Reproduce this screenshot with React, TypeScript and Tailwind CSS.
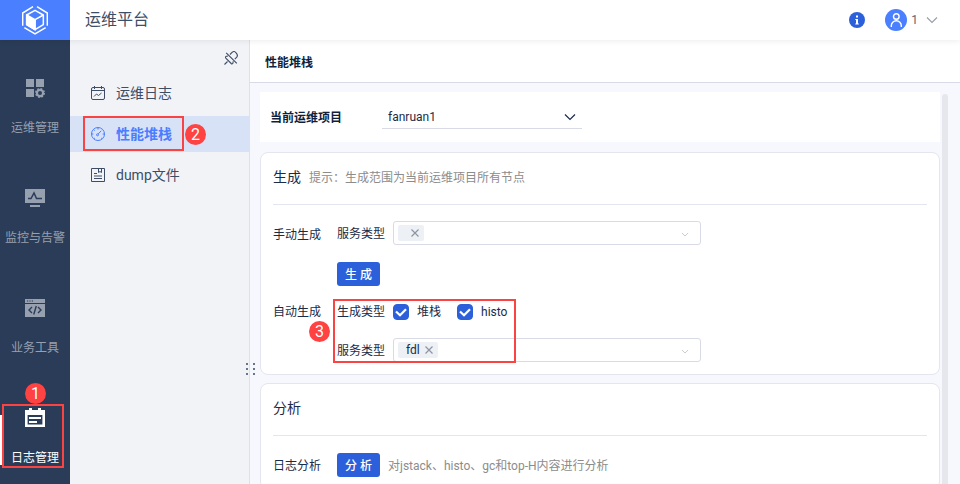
import React from "react";

const Badge = ({ children, className }: { children: React.ReactNode; className: string }) => (
  <span
    className={`absolute z-20 flex size-[21px] items-center justify-center rounded-full bg-[#ff4242] text-base leading-5 font-normal text-white ${className}`}
  >
    {children}
  </span>
);

const Outline = ({ className }: { className: string }) => (
  <span className={`pointer-events-none absolute z-10 border-2 border-[#fa4343] ${className}`} />
);

const Logo = () => (
  <svg className="h-[30px] w-[26px]" viewBox="0 0 78 88" fill="none" stroke="#fff" strokeWidth="4.5">
    <path d="M2 61V23L33 4M45 4l31 19v38M7 67l32 19 32-19" />
    <path d="M39 15 64 29v29L39 73 14 58V29z" strokeLinejoin="round" />
    <path d="M64 29 39 43v29" />
    <path d="M14 29 39 43v30L14 58z" fill="#fff" />
  </svg>
);

const GridIcon = () => (
  <svg className="size-[22px]" viewBox="0 0 22 22" fill="currentColor">
    <path d="M2 2h8v8H2zM12 2h8v8h-8zM2 12h8v8H2z" />
    <circle cx="16" cy="16" r="3.1" fill="none" stroke="currentColor" strokeWidth="2.2" />
    <circle cx="16" cy="16" r="4.3" fill="none" stroke="currentColor" strokeWidth="1.4" strokeDasharray="1.8 1.58" />
  </svg>
);

const MonitorIcon = () => (
  <svg className="size-[22px]" viewBox="0 0 22 22" fill="currentColor">
    <path d="M1 2h20v14H1zM6 18h10v2H6z" />
    <path d="M4 11.5h3L10 6l2.5 5.5H18" fill="none" stroke="#2b3c58" strokeWidth="1.5" />
  </svg>
);

const CodeIcon = () => (
  <svg className="size-[22px]" viewBox="0 0 22 22" fill="currentColor">
    <path d="M1 2h20v4H1zM1 7h20v13H1z" />
    <path d="M3 4h1.2M5.4 4h1.2M7.8 4H9" stroke="#2b3c58" strokeWidth="1.2" />
    <path d="M8 10l-3 3 3 3M14 10l3 3-3 3M12.3 9l-2.6 8.5" fill="none" stroke="#2b3c58" strokeWidth="1.4" />
  </svg>
);

const CalendarIcon = () => (
  <svg className="size-[22px]" viewBox="0 0 22 22" fill="currentColor">
    <path fillRule="evenodd" d="M5 1h3v2h6V1h3v2h4v17H1V3h4zM3.6 8v9.5h14.8V8z" />
    <path d="M5 10h12v2H5zM5 14h8v2H5z" />
  </svg>
);

const LogIcon = () => (
  <svg className="size-4" viewBox="0 0 16 16" fill="none" stroke="currentColor">
    <rect x="1.5" y="2.5" width="13" height="12" rx="1.5" />
    <path d="M1.5 5.5h13M4.5 1v3M11.5 1v3M4 11.5 6.5 9l2 1.5 3-2.5" />
  </svg>
);

const GaugeIcon = () => (
  <svg className="size-4" viewBox="0 0 16 16" fill="none" stroke="currentColor">
    <circle cx="8" cy="8" r="6.5" />
    <circle cx="7.5" cy="8.8" r="1" />
    <path d="M8.2 8l3-3.2M8 1.5v2M3.4 8h-2M14.5 8h-1.8M3.6 3.6l1.1 1.1M4 12.3h.8M11.2 12.3h.8" />
  </svg>
);

const FileIcon = () => (
  <svg className="size-4" viewBox="0 0 16 16" fill="none" stroke="currentColor">
    <path d="M1.5 1.5h13v13h-13z" />
    <path d="M8.5 1.5v4l1.5-1 1.5 1v-4M4 6.5h3M4 9h8M4 11.5h8" />
  </svg>
);

const PinIcon = () => (
  <svg className="size-4" viewBox="0 0 16 16" fill="none" stroke="currentColor" strokeWidth="1.1">
    <path d="M3.2 2.8l10.6 10.6M1.5 14.5l3-3" />
    <path d="M5 6 3.6 6.3c-1 .2-1.5 1-.8 1.8l5.4 5.4c.8.7 1.7.3 1.8-.8l.2-1.5" />
    <path d="M7 4.5l2.3-2.3M11.8 9.2l2.2-2.3M9.2 2.3C10.8.8 12 1.7 13 2.8s2.2 2.3 1 4.1" />
  </svg>
);

const Chevron = ({ className }: { className: string }) => (
  <svg className={className} viewBox="0 0 12 8" fill="none" stroke="currentColor" strokeWidth="1.2">
    <path d="M1 1.5 6 6.5l5-5" />
  </svg>
);

const sections = [
  { label: "运维管理", icon: <GridIcon /> },
  { label: "监控与告警", icon: <MonitorIcon /> },
  { label: "业务工具", icon: <CodeIcon /> },
  { label: "日志管理", icon: <CalendarIcon />, active: true },
];

const pages = [
  { label: "运维日志", icon: <LogIcon /> },
  { label: "性能堆栈", icon: <GaugeIcon />, active: true },
  { label: "dump文件", icon: <FileIcon /> },
];

const Header = () => (
  <header className="relative z-30 flex h-10 shrink-0 items-center bg-white shadow-[0_1px_6px_rgba(0,0,0,0.08)]">
    <a href="#" aria-label="首页" className="flex h-10 w-[70px] items-center justify-center bg-[#4a80ff]">
      <Logo />
    </a>
    <h1 className="ml-[15px] flex-1 text-base text-[#3d4d66]">运维平台</h1>
    <button aria-label="信息" className="mr-5">
      <svg className="size-4" viewBox="0 0 16 16">
        <circle cx="8" cy="8" r="8" fill="#2c60db" />
        <path d="M7 3.5h2v2H7zM6.3 7H9v4.5h.8v1H6.3v-1H7V8h-.7z" fill="#fff" />
      </svg>
    </button>
    <button className="mr-[22px] flex items-center text-xs text-[#5f6470]">
      <svg className="mr-1 size-[22px]" viewBox="0 0 22 22" fill="none" stroke="#fff" strokeWidth="1.4">
        <circle cx="11" cy="11" r="11" fill="#4a80ff" stroke="none" />
        <circle cx="11.3" cy="7.5" r="2.8" />
        <path d="M6.3 18v-1.2a5 5 0 0 1 10 0V18" />
      </svg>
      1
      <Chevron className="ml-2 h-2 w-3 text-[#9a9fa9]" />
    </button>
  </header>
);

const Sidebar = () => (
  <nav className="w-[70px] shrink-0 bg-[#2b3c58] pt-[15px]">
    {sections.map(({ label, icon, active }) => (
      <a
        key={label}
        href="#"
        className={`relative flex h-[110px] flex-col items-center pt-[22px] text-xs whitespace-nowrap ${
          active ? "text-white" : "text-[#97a0af]"
        }`}
      >
        {icon}
        <span className="mt-[21px] leading-4">{label}</span>
        {active && (
          <>
            <span className="absolute top-[30px] left-0 h-[50px] w-0.5 bg-white" />
            <Outline className="top-[19px] left-0.5 h-16 w-[62px]" />
            <Badge className="-top-0.5 left-[25px]">1</Badge>
          </>
        )}
      </a>
    ))}
  </nav>
);

const SubMenu = () => (
  <nav className="relative w-[180px] shrink-0 border-r border-[#dfe1e8] bg-[#f2f3f7]">
    <div className="flex h-[35px] items-center justify-end pr-2.5">
      <button aria-label="取消固定" className="text-[#3d4d66]">
        <PinIcon />
      </button>
    </div>
    <div className="flex flex-col gap-[5px]">
      {pages.map(({ label, icon, active }) => (
        <a
          key={label}
          href="#"
          className={`relative flex h-9 items-center gap-2.5 pl-5 text-sm ${
            active ? "bg-[#d8e2f6] font-bold text-[#4a7dff]" : "text-[#3d4d66]"
          }`}
        >
          {icon}
          {label}
          {active && (
            <>
              <Outline className="top-0 left-[13px] h-[35px] w-[101px]" />
              <Badge className="top-2 left-[115px]">2</Badge>
            </>
          )}
        </a>
      ))}
    </div>
    <span className="absolute top-[323px] -right-1.5 z-10 grid grid-cols-2 gap-x-[5px] gap-y-[3px]">
      {[0, 1, 2, 3, 4, 5].map((dot) => (
        <i key={dot} className="size-0.5 bg-[#66758c]" />
      ))}
    </span>
  </nav>
);

const TagSelect = ({ id, tag }: { id: string; tag?: string }) => (
  <div className="ml-2 flex h-6 w-[308px] items-center rounded-[3px] border border-[#d8dae6] bg-white pl-1">
    <span className="flex h-4 items-center gap-1 rounded-xs bg-[#edf0f5] pr-1 pl-2">
      <span>{tag}</span>
      <button aria-label="移除" className="text-[#8d95a3]">
        <svg className="size-2.5" viewBox="0 0 10 10" fill="none" stroke="currentColor" strokeWidth="1.2">
          <path d="M1.5 1.5l7 7M8.5 1.5l-7 7" />
        </svg>
      </button>
    </span>
    <div className="relative flex flex-1 items-center">
      <select id={id} className="h-5 w-full appearance-none bg-transparent outline-none">
        <option />
      </select>
      <Chevron className="pointer-events-none absolute top-[9px] right-[11px] h-[5px] w-2 text-[#b4b8c2]" />
    </div>
  </div>
);

const Check = ({ label }: { label: string }) => (
  <label className="ml-2 flex w-14 items-center gap-2">
    <span className="grid size-4 shrink-0">
      <input
        type="checkbox"
        defaultChecked
        className="peer col-start-1 row-start-1 size-4 appearance-none rounded border border-[#2c60db] checked:bg-[#2c60db]"
      />
      <svg
        className="pointer-events-none col-start-1 row-start-1 hidden size-4 peer-checked:block"
        viewBox="0 0 16 16"
        fill="none"
        stroke="#fff"
        strokeWidth="2.2"
      >
        <path d="M3 7.5 7 11.3 13 5.2" />
      </svg>
    </span>
    {label}
  </label>
);

const Action = ({ children }: { children: React.ReactNode }) => (
  <button className="h-6 w-[43px] rounded-[3px] bg-[#2c60db] pt-0.5 font-medium text-white">{children}</button>
);

const Card = ({ title, hint, children }: { title: string; hint?: string; children: React.ReactNode }) => (
  <section className="shrink-0 rounded-lg border border-[#e3e6ee] bg-white px-3 pb-3">
    <div className="mb-4 flex h-[52px] items-center gap-2 border-b border-[#e3e6ee] pb-1">
      <h3 className="text-sm">{title}</h3>
      {hint && <p className="pt-0.5 text-[#8c8c8c]">{hint}</p>}
    </div>
    {children}
  </section>
);

export default function App() {
  return (
    <div className="flex h-screen flex-col overflow-hidden bg-white font-['Roboto','Noto_Sans_CJK_SC',sans-serif] text-xs text-[#1a2b48]">
      <Header />
      <div className="flex min-h-0 flex-1">
        <Sidebar />
        <SubMenu />
        <main className="flex min-w-0 flex-1 flex-col bg-[#f7f8fd]">
          <h2 className="flex h-[43px] shrink-0 items-center border-b border-[#d8dae6] bg-white pt-1 pl-[15px] font-bold text-[#0f1f3d]">
            性能堆栈
          </h2>
          <div className="flex min-h-0 flex-1 pt-[9px] pr-3 pl-2.5">
            <div className="flex min-w-0 flex-1 flex-col overflow-hidden">
              <div className="mb-2.5 flex h-[50px] shrink-0 items-center bg-white px-2.5">
                <label htmlFor="project" className="w-28 pt-0.5 font-bold text-[#0f1f3d]">
                  当前运维项目
                </label>
                <div className="relative w-[200px]">
                  <select
                    id="project"
                    className="h-6 w-full appearance-none border-b border-[#d8dae6] bg-white pl-1.5 outline-none"
                  >
                    <option>fanruan1</option>
                  </select>
                  <Chevron className="pointer-events-none absolute top-2 right-1.5 h-2 w-3" />
                </div>
              </div>
              <div className="flex flex-col gap-2">
                <Card title="生成" hint="提示：生成范围为当前运维项目所有节点">
                  <div className="flex items-start gap-4">
                    <span className="pt-0.5 leading-6">手动生成</span>
                    <div className="flex flex-col items-start gap-[17px]">
                      <div className="flex items-center">
                        <label htmlFor="manual-service" className="pt-0.5">
                          服务类型
                        </label>
                        <TagSelect id="manual-service" />
                      </div>
                      <Action>生 成</Action>
                    </div>
                  </div>
                  <div className="mt-3 flex items-start gap-4">
                    <span className="pt-0.5 leading-6">自动生成</span>
                    <div className="relative flex flex-col gap-3.5 pt-0.5">
                      <div className="flex h-6 items-center">
                        <span>生成类型</span>
                        <Check label="堆栈" />
                        <Check label="histo" />
                      </div>
                      <div className="flex items-center">
                        <label htmlFor="auto-service" className="pt-0.5">
                          服务类型
                        </label>
                        <TagSelect id="auto-service" tag="fdl" />
                      </div>
                      <Outline className="top-px -left-1 h-16 w-[183px]" />
                      <Badge className="top-[23px] -left-7">3</Badge>
                    </div>
                  </div>
                </Card>
                <Card title="分析">
                  <div className="flex items-center pt-px">
                    <span className="mr-4 pt-0.5">日志分析</span>
                    <Action>分 析</Action>
                    <span className="ml-2 pt-0.5 text-[#8c8c8c]">对jstack、histo、gc和top-H内容进行分析</span>
                  </div>
                </Card>
              </div>
            </div>
            <div className="mt-0.5 ml-0.5 w-1.5 rounded-t-full bg-[#e5e7ed]" />
          </div>
        </main>
      </div>
    </div>
  );
}
